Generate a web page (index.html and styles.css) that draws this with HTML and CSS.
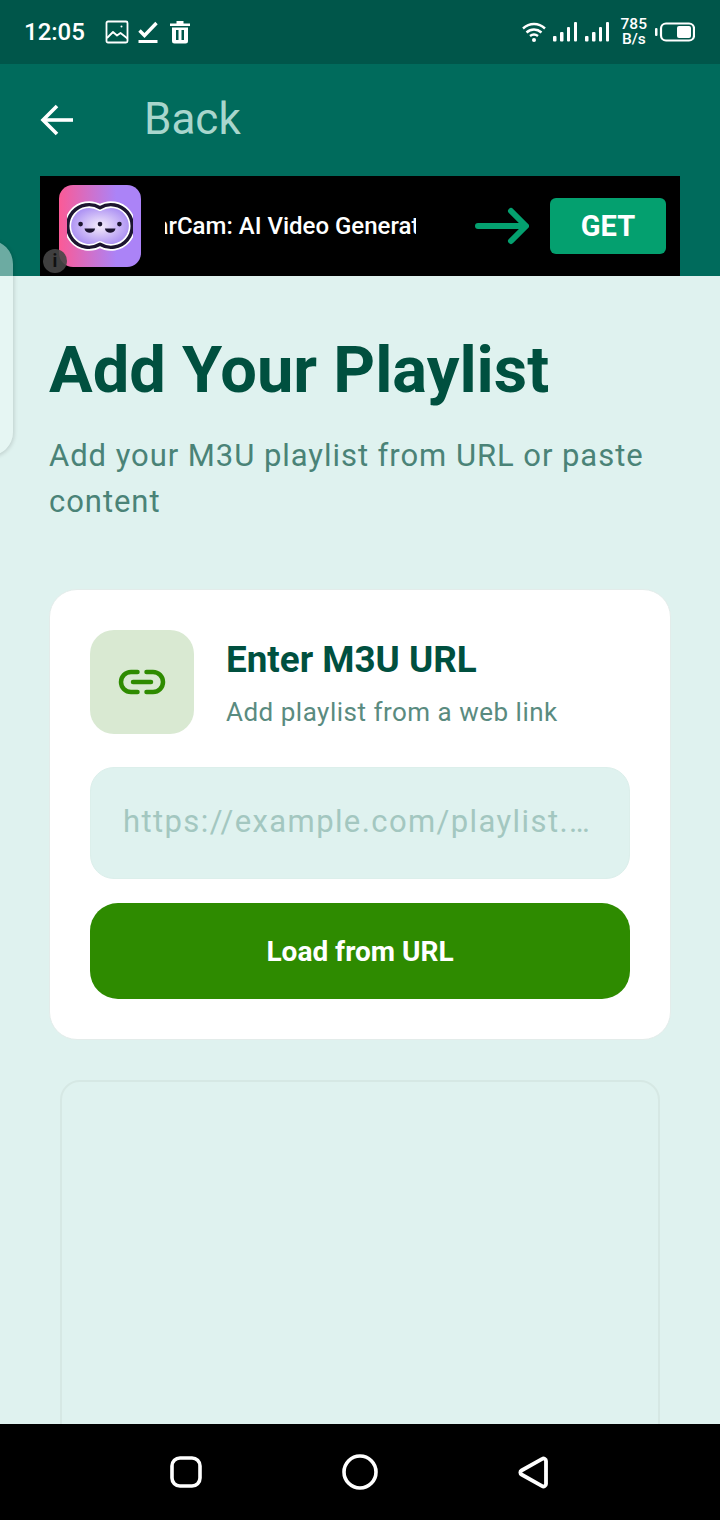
FILE: index.html
```html
<!DOCTYPE html>
<html lang="en">
<head>
    <meta charset="UTF-8">
    <meta name="viewport" content="width=device-width, initial-scale=1.0">
    <title>Add Your Playlist</title>
    <link rel="stylesheet" href="styles.css">
</head>
<body>
    <div class="status-bar">
        <span class="clock">12:05</span>
        <svg class="status-icon" width="24" height="24" viewBox="0 0 24 24" fill="none" stroke="#fff" stroke-width="1.800">
            <rect x="1.500" y="1.500" width="21" height="21" rx="1.500"/>
            <path d="M2 18l6-6 4 3.500 3.500-2.500 7 5.500" stroke-linejoin="round"/>
            <circle cx="16.500" cy="6.500" r="1" fill="#fff" stroke="none"/>
        </svg>
        <svg class="status-icon check-icon" width="20" height="24" viewBox="0 0 20 24" fill="none" stroke="#fff">
            <path d="M1.500 10.500l5 5L18.500 3" stroke-width="3.400"/>
            <path d="M0.500 21.500h19" stroke-width="3"/>
        </svg>
        <svg class="status-icon" width="20" height="24" viewBox="0 0 20 24">
            <path fill="#fff" fill-rule="evenodd" d="M6.500 1h7v2.500H20V6H0V3.500h6.500zM2 7.500h16V21a2.500 2.500 0 0 1-2.500 2.500h-11A2.500 2.500 0 0 1 2 21zM6 10v10h2.500V10zM11.500 10v10H14V10z"/>
        </svg>
        <div class="status-right">
            <svg class="wifi" width="24" height="20" viewBox="0 0 24 20" fill="none" stroke="#fff" stroke-width="2.400">
                <path d="M1 6.500c6.500-6 15.500-6 22 0"/>
                <path d="M4.500 10.500c4.500-4 10.500-4 15 0"/>
                <path d="M8 14c2.500-2 5.500-2 8 0"/>
                <circle cx="12" cy="18" r="2" fill="#fff" stroke="none"/>
            </svg>
            <svg width="24" height="20" viewBox="0 0 24 20" fill="#fff">
                <rect x="0" y="14" width="3.500" height="5.500" rx="1"/>
                <rect x="7" y="10" width="3.500" height="9.500" rx="1"/>
                <rect x="14" y="5" width="3" height="14.500" rx="1"/>
                <rect x="21" y="0" width="3" height="19.500" rx="1"/>
            </svg>
            <svg width="24" height="20" viewBox="0 0 24 20" fill="#fff">
                <rect x="0" y="14" width="3.500" height="5.500" rx="1"/>
                <rect x="7" y="10" width="3.500" height="9.500" rx="1"/>
                <rect x="14" y="5" width="3" height="14.500" rx="1"/>
                <rect x="21" y="0" width="3" height="19.500" rx="1"/>
            </svg>
            <div class="net-speed"><span>785</span><span>B/s</span></div>
            <svg class="battery" width="40" height="20" viewBox="0 0 40 20">
                <rect x="0" y="6" width="2.500" height="8" rx="1" fill="#fff"/>
                <rect x="6" y="1.500" width="33" height="17" rx="5" fill="none" stroke="#fff" stroke-width="2.200"/>
                <rect x="22" y="4" width="14" height="12" rx="2" fill="#fff"/>
            </svg>
        </div>
    </div>

    <header class="app-bar">
        <div class="app-bar-row">
            <svg class="back-arrow" width="33" height="32" viewBox="0 0 33 32" fill="none" stroke="#fff" stroke-width="3.600">
                <path d="M33 16H3"/>
                <path d="M17 2L3 16l14 14"/>
            </svg>
            <span class="back-label">Back</span>
        </div>
        <div class="ad">
            <div class="ad-logo">
                <svg width="66" height="50" viewBox="0 0 68 50">
                    <defs>
                        <radialGradient id="blob">
                            <stop offset="0" stop-color="#f5ecfb"/>
                            <stop offset="1" stop-color="#a88cf3"/>
                        </radialGradient>
                    </defs>
                    <path d="M34 6.100A22 22 0 1 0 34 43.900A22 22 0 1 0 34 6.100z" fill="url(#blob)" stroke="#fff" stroke-width="7" stroke-linejoin="round"/>
                    <path d="M34 6.100A22 22 0 1 0 34 43.900A22 22 0 1 0 34 6.100z" fill="none" stroke="#1c1530" stroke-width="3.600" stroke-linejoin="round"/>
                    <circle cx="14" cy="23" r="2.400" fill="#1c1530"/>
                    <circle cx="34" cy="23" r="2.400" fill="#1c1530"/>
                    <circle cx="54" cy="23" r="2.400" fill="#1c1530"/>
                    <path d="M18 27.500h11c-1 6-10 6-11 0zM39 27.500h11c-1 6-10 6-11 0z" fill="#1c1530"/>
                </svg>
            </div>
            <div class="ad-text"><span>StarCam: AI Video Generator</span></div>
            <svg class="ad-arrow" width="54" height="38" viewBox="0 0 54 38" fill="none" stroke="#04a06f" stroke-width="6" stroke-linecap="round" stroke-linejoin="round">
                <path d="M3 19h47"/>
                <path d="M36 4l15 15-15 15"/>
            </svg>
            <div class="ad-get">GET</div>
            <div class="ad-info">i</div>
        </div>
    </header>

    <main class="content">
        <h1>Add Your Playlist</h1>
        <p class="lead">Add your M3U playlist from URL or paste content</p>

        <section class="card">
            <div class="card-head">
                <div class="card-icon">
                    <svg width="48" height="26" viewBox="0 0 48 26" fill="none" stroke="#2e8b00" stroke-width="4.500" stroke-linecap="round">
                        <path d="M19.500 3H13a10 10 0 0 0 0 20h6.500"/>
                        <path d="M28.500 3H35a10 10 0 0 1 0 20h-6.500"/>
                        <path d="M15 13h18"/>
                    </svg>
                </div>
                <div>
                    <h2>Enter M3U URL</h2>
                    <p class="card-sub">Add playlist from a web link</p>
                </div>
            </div>
            <div class="url-input"><span>https://example.com/playlist.m3u8</span></div>
            <button class="load-btn">Load from URL</button>
        </section>

        <div class="empty-panel"></div>
    </main>

    <div class="side-handle"></div>

    <nav class="nav-bar">
        <svg width="32" height="32" viewBox="0 0 32 32" fill="none" stroke="#fff" stroke-width="3.600"><rect x="2" y="2" width="28" height="28" rx="8"/></svg>
        <svg width="36" height="36" viewBox="0 0 36 36" fill="none" stroke="#fff" stroke-width="3.600"><circle cx="18" cy="18" r="16"/></svg>
        <svg width="30" height="33" viewBox="0 0 30 33" fill="none" stroke="#fff" stroke-width="3.800"><path d="M28 5v23a2.500 2.500 0 0 1-3.800 2.100L3.500 18.500a2.300 2.300 0 0 1 0-4L24.200 2.900A2.500 2.500 0 0 1 28 5z"/></svg>
    </nav>
</body>
</html>
```

FILE: styles.css
```css
* {
    box-sizing: border-box;
}

html, body {
    margin: 0;
    height: 1520px;
}

body {
    position: relative;
    display: flex;
    flex-direction: column;
    overflow: hidden;
    font-family: Roboto, "Liberation Sans", sans-serif;
    background-color: #dff2ef;
}

.status-bar {
    display: flex;
    align-items: center;
    height: 64px;
    padding: 0 24px;
    background-color: #00564a;
    color: white;
}

.clock {
    font-size: 24px;
    font-weight: 500;
    margin-right: 20px;
}

.status-icon {
    margin-right: 9px;
}

.status-icon.check-icon {
    margin-right: 12px;
}

.status-right {
    display: flex;
    align-items: center;
    gap: 8px;
    margin-left: auto;
}

.wifi {
    margin-right: -1px;
}

.net-speed {
    display: flex;
    flex-direction: column;
    align-items: center;
    margin: 0 0 0 4px;
    font-size: 15.500px;
    font-weight: 500;
    line-height: 15px;
}

.battery {
    margin-right: 1px;
}

.app-bar {
    height: 212px;
    padding: 0 40px;
    background-color: #006b5c;
}

.app-bar-row {
    display: flex;
    align-items: center;
    height: 112px;
}

.back-label {
    margin: 0 0 3px 71px;
    font-size: 44px;
    color: #a8d6cd;
}

.ad {
    position: relative;
    display: flex;
    align-items: center;
    height: 100px;
    background: black;
}

.ad-logo {
    display: flex;
    align-items: center;
    justify-content: center;
    width: 82px;
    height: 82px;
    margin-left: 19px;
    border-radius: 14px;
    background: linear-gradient(90deg, #fb5a96, #ab83f7 70%);
}

.ad-text {
    width: 251px;
    margin-left: 24px;
    overflow: hidden;
    color: white;
    font-size: 24px;
    font-weight: 500;
    white-space: nowrap;
}

.ad-text span {
    display: block;
    margin-left: -32px;
}

.ad-arrow {
    margin-left: 59px;
}

.ad-get {
    width: 116px;
    height: 56px;
    margin-left: 21px;
    border-radius: 6px;
    background-color: #04a06f;
    color: white;
    font-size: 29px;
    font-weight: 700;
    line-height: 56px;
    text-align: center;
}

.ad-info {
    position: absolute;
    left: 3px;
    bottom: 3px;
    width: 24px;
    height: 24px;
    border-radius: 50%;
    background: rgba(70, 70, 70, 0.9);
    color: #111;
    font-size: 18px;
    font-weight: 700;
    line-height: 24px;
    text-align: center;
}

.content {
    flex: 1;
    min-height: 0;
    overflow: hidden;
    padding: 58px 49px 0;
}

h1 {
    margin: 0;
    color: #00503f;
    font-size: 65px;
    font-weight: 700;
    line-height: 72px;
}

.lead {
    margin: 27px 0 0;
    color: #4a8377;
    font-size: 31px;
    line-height: 46px;
    letter-spacing: 0.950px;
}

.card {
    margin-top: 64px;
    padding: 40px;
    height: 451px;
    border: 1px solid #e3ecea;
    border-radius: 28px;
    background: white;
}

.card-head {
    display: flex;
    gap: 32px;
}

.card-icon {
    display: flex;
    align-items: center;
    justify-content: center;
    width: 104px;
    height: 104px;
    border-radius: 24px;
    background-color: #d9e9d2;
}

h2 {
    margin: 6px 0 0;
    color: #00503f;
    font-size: 36.800px;
    font-weight: 700;
    line-height: 48px;
}

.card-sub {
    margin: 10px 0 0;
    color: #5a8b80;
    font-size: 26px;
    line-height: 36px;
    letter-spacing: 0.500px;
}

.url-input {
    height: 112px;
    margin-top: 33px;
    padding: 0 38px 0 32px;
    border: 1px solid #dcefeb;
    border-radius: 24px;
    background-color: #dff2ef;
    color: #a3c7c0;
    font-size: 31px;
    line-height: 108px;
    letter-spacing: 1.400px;
}

.url-input span {
    display: block;
    overflow: hidden;
    white-space: nowrap;
    text-overflow: ellipsis;
}

.load-btn {
    display: block;
    width: 100%;
    height: 96px;
    margin-top: 24px;
    border: none;
    border-radius: 28px;
    background-color: #2e8b00;
    color: white;
    font-family: inherit;
    font-size: 28px;
    font-weight: 700;
}

.empty-panel {
    height: 400px;
    margin: 40px 11px 0;
    border: 2px solid #d6e8e4;
    border-radius: 20px;
}

.side-handle {
    position: absolute;
    left: -20px;
    top: 240px;
    width: 33px;
    height: 216px;
    border-radius: 0 24px 24px 0;
    background: rgba(240, 250, 248, 0.45);
    box-shadow: 1px 1px 4px rgba(0, 0, 0, 0.15);
}

.nav-bar {
    display: flex;
    align-items: center;
    justify-content: space-between;
    height: 96px;
    padding: 0 172px 0 170px;
    background: black;
}
```
